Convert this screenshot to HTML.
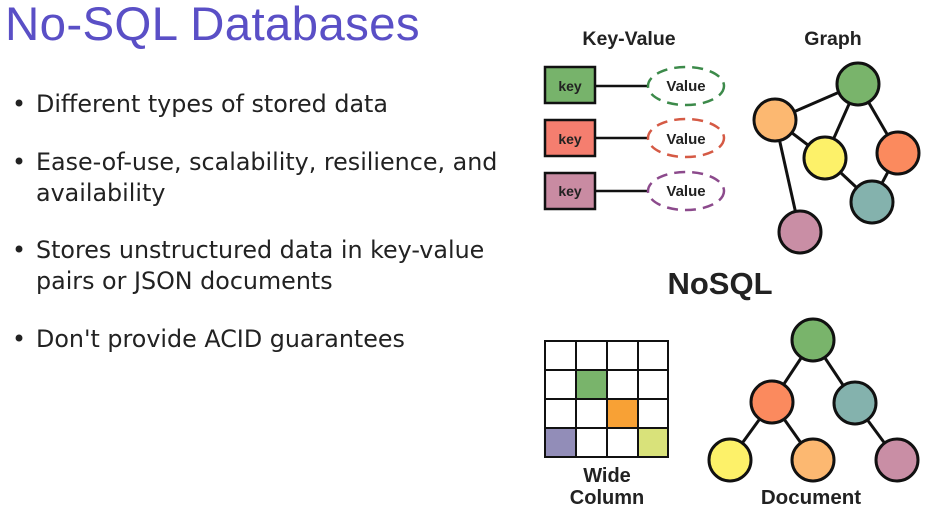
<!DOCTYPE html><html><head><style>
body{margin:0;width:934px;height:521px;background:#fff;overflow:hidden;position:relative;font-family:"Liberation Sans",sans-serif}
h1{position:absolute;left:5px;top:-3px;margin:0;font-weight:normal;font-size:47.5px;color:#5a4fc6;letter-spacing:0.3px}
.b{position:absolute;left:12px;font-size:23.8px;color:#222;line-height:31px;font-family:"DejaVu Sans",sans-serif}
.b span{position:absolute;left:0}
.b div{margin-left:24px}
svg{position:absolute;left:0;top:0}
</style></head><body>
<h1>No-SQL Databases</h1>
<div class="b" style="top:89px"><span>•</span><div>Different types of stored data</div></div>
<div class="b" style="top:147px"><span>•</span><div>Ease-of-use, scalability, resilience, and<br>availability</div></div>
<div class="b" style="top:235px"><span>•</span><div>Stores unstructured data in key-value<br>pairs or JSON documents</div></div>
<div class="b" style="top:324px"><span>•</span><div>Don't provide ACID guarantees</div></div>
<svg width="934" height="521" font-family="Liberation Sans" font-weight="bold">
<g font-size="19.5" text-anchor="middle" fill="#222"><text x="629" y="45">Key-Value</text><text x="833" y="45">Graph</text>
<text x="720" y="294" font-size="31">NoSQL</text>
<text x="607" y="482" font-size="20">Wide</text><text x="607" y="504" font-size="20">Column</text><text x="811" y="504" font-size="20.5">Document</text></g>
<g stroke="#111" stroke-width="2.5">
<line x1="595" y1="86" x2="648" y2="86"/><line x1="595" y1="138" x2="648" y2="138"/><line x1="595" y1="191" x2="648" y2="191"/>
<rect x="545" y="67" width="50" height="36" fill="#77b36b"/><rect x="545" y="120" width="50" height="36" fill="#f57e6f"/><rect x="545" y="173" width="50" height="36" fill="#c98ba2"/>
</g>
<g fill="#fff" stroke-width="2.5" stroke-dasharray="11 7">
<ellipse cx="686" cy="86" rx="38" ry="19" stroke="#3c8a4a"/><ellipse cx="686" cy="138" rx="38" ry="19" stroke="#d55a45"/><ellipse cx="686" cy="191" rx="38" ry="19" stroke="#8c4a8c"/></g>
<g font-size="14" text-anchor="middle" fill="#222"><text x="570" y="91">key</text><text x="570" y="144">key</text><text x="570" y="196">key</text>
<g font-size="15"><text x="686" y="91">Value</text><text x="686" y="144">Value</text><text x="686" y="196">Value</text></g></g>
<g stroke="#111" stroke-width="3">
<line x1="775" y1="120" x2="858" y2="84"/><line x1="858" y1="84" x2="825" y2="158"/><line x1="858" y1="84" x2="898" y2="153"/><line x1="775" y1="120" x2="825" y2="158"/><line x1="825" y1="158" x2="872" y2="202"/><line x1="898" y1="153" x2="872" y2="202"/><line x1="775" y1="120" x2="800" y2="232"/>
<circle cx="858" cy="84" r="21" fill="#79b46b"/><circle cx="775" cy="120" r="21" fill="#fcb871"/><circle cx="825" cy="158" r="21" fill="#fdf169"/><circle cx="898" cy="153" r="21" fill="#fb8a5e"/><circle cx="872" cy="202" r="21" fill="#84b2ad"/><circle cx="800" cy="232" r="21" fill="#c98ea5"/>
<line x1="813" y1="340" x2="772" y2="402"/><line x1="813" y1="340" x2="855" y2="403"/><line x1="772" y1="402" x2="730" y2="460"/><line x1="772" y1="402" x2="813" y2="460"/><line x1="855" y1="403" x2="897" y2="460"/>
<circle cx="813" cy="340" r="21" fill="#79b46b"/><circle cx="772" cy="402" r="21" fill="#fb8a5e"/><circle cx="855" cy="403" r="21" fill="#84b2ad"/><circle cx="730" cy="460" r="21" fill="#fdf169"/><circle cx="813" cy="460" r="21" fill="#fcb871"/><circle cx="897" cy="460" r="21" fill="#c98ea5"/>
</g>
<g stroke="#111" stroke-width="2">
<rect x="576" y="370" width="30" height="29" fill="#79b46b" stroke="none"/><rect x="607" y="399" width="30" height="29" fill="#f8a135" stroke="none"/><rect x="545" y="428" width="30" height="29" fill="#928db8" stroke="none"/><rect x="638" y="428" width="30" height="29" fill="#d9e27a" stroke="none"/>
<rect x="545" y="341" width="123" height="116" fill="none"/>
<line x1="576" y1="341" x2="576" y2="457"/><line x1="607" y1="341" x2="607" y2="457"/><line x1="638" y1="341" x2="638" y2="457"/>
<line x1="545" y1="370" x2="668" y2="370"/><line x1="545" y1="399" x2="668" y2="399"/><line x1="545" y1="428" x2="668" y2="428"/>
</g></svg>
</body></html>
